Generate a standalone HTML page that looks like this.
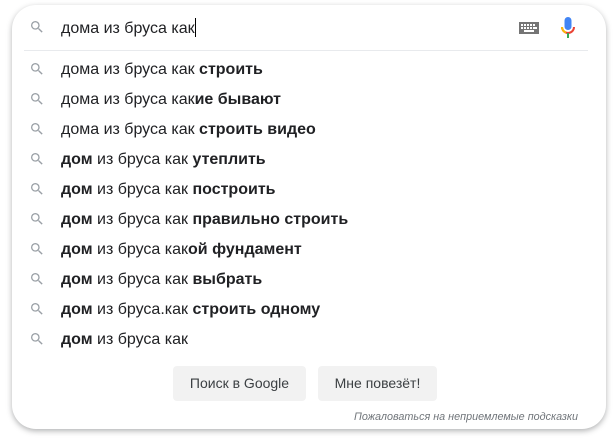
<!DOCTYPE html>
<html><head><meta charset="utf-8"><style>
body{margin:0;width:616px;height:442px;background:#fff;font-family:"Liberation Sans",Arial,sans-serif;overflow:hidden}
.box{position:absolute;left:12px;top:5px;width:594px;height:424px;border-radius:24px;background:#fff;box-shadow:0 2px 6px rgba(32,33,36,.35)}
.inp{position:absolute;left:61px;top:18px;font-size:16px;color:#202124}
.cur{display:inline-block;width:1px;height:19px;background:#000;vertical-align:-4px}
.div{position:absolute;left:24px;top:50px;width:564px;height:1px;background:#e8eaed}
.row{position:absolute;left:61px;font-size:16px;color:#202124;line-height:20px}
.row b{font-weight:bold}
.ic{position:absolute;left:29px;width:16px;height:16px}
.btn{position:absolute;top:366px;height:35px;background:#f2f2f2;border-radius:4px;font-size:14px;color:#3c4043;line-height:35px;text-align:center}
.foot{position:absolute;right:38px;top:411px;font-size:10.8px;font-style:italic;color:#70757a}
</style></head><body>
<div class="box"></div>
<svg class="ic" style="top:19px" viewBox="0 0 24 24"><path fill="#9aa0a6" d="M15.5 14h-.79l-.28-.27A6.47 6.47 0 0 0 16 9.5 6.5 6.5 0 1 0 9.5 16c1.61 0 3.09-.59 4.23-1.57l.27.28v.79l5 4.99L20.49 19l-4.99-5zm-6 0C7.01 14 5 11.99 5 9.5S7.01 5 9.5 5 14 7.01 14 9.5 11.99 14 9.5 14z"/></svg>
<div class="inp">дома из бруса как<span class="cur"></span></div>
<svg style="position:absolute;left:519px;top:22px" width="20" height="12"><rect width="20" height="12" fill="#757575"/><g fill="#fff"><rect x="2" y="2" width="2" height="2"/><rect x="5" y="2" width="2" height="2"/><rect x="8" y="2" width="2" height="2"/><rect x="11" y="2" width="2" height="2"/><rect x="14" y="2" width="2" height="2"/><rect x="2" y="5" width="2" height="2"/><rect x="5" y="5" width="2" height="2"/><rect x="8" y="5" width="2" height="2"/><rect x="11" y="5" width="2" height="2"/><rect x="14" y="5" width="4" height="2"/><rect x="5" y="8" width="10" height="2"/></g></svg>
<svg style="position:absolute;left:560px;top:16px" width="16" height="24" viewBox="0 0 16 24"><rect x="4.5" y="1" width="7" height="13" rx="3.5" fill="#4285f4"/><path d="M2 11a6 6 0 0 0 12 0" fill="none" stroke="#ea4335" stroke-width="2"/><path d="M2 11a6 6 0 0 0 4 5.6" fill="none" stroke="#fbbc05" stroke-width="2"/><rect x="7" y="17" width="2" height="5" fill="#34a853"/></svg>
<div class="div"></div>
<div id="rows"></div>
<script>
var r=["дома из бруса как <b>строить</b>","дома из бруса как<b>ие бывают</b>","дома из бруса как <b>строить видео</b>","<b>дом</b> из бруса как <b>утеплить</b>","<b>дом</b> из бруса как <b>построить</b>","<b>дом</b> из бруса как <b>правильно строить</b>","<b>дом</b> из бруса как<b>ой фундамент</b>","<b>дом</b> из бруса как <b>выбрать</b>","<b>дом</b> из бруса.как <b>строить одному</b>","<b>дом</b> из бруса как"];
var ic='<svg viewBox="0 0 24 24" width="16" height="16"><path fill="#9aa0a6" d="M15.5 14h-.79l-.28-.27A6.47 6.47 0 0 0 16 9.5 6.5 6.5 0 1 0 9.5 16c1.61 0 3.09-.59 4.23-1.57l.27.28v.79l5 4.99L20.49 19l-4.99-5zm-6 0C7.01 14 5 11.99 5 9.5S7.01 5 9.5 5 14 7.01 14 9.5 11.99 14 9.5 14z"/></svg>';
var h="";for(var i=0;i<r.length;i++){var y=70+i*30;h+='<div class="ic" style="top:'+(y-9)+'px">'+ic+'</div><div class="row" style="top:'+(y-10)+'px">'+r[i]+'</div>';}
document.getElementById("rows").innerHTML=h;
</script>
<div class="btn" style="left:173px;width:133px">Поиск в Google</div>
<div class="btn" style="left:318px;width:119px">Мне повезёт!</div>
<div class="foot">Пожаловаться на неприемлемые подсказки</div>
</body></html>
